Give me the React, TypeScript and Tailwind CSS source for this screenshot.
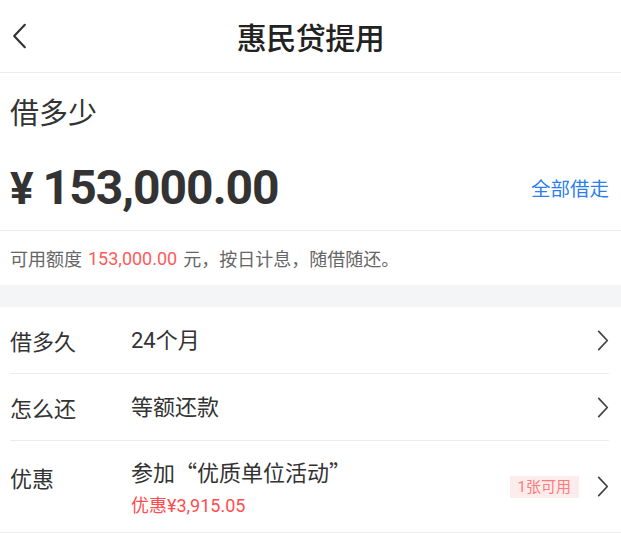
import React from 'react';

const CJK = '"Noto Sans CJK SC", sans-serif';
const NUM = 'Roboto, "Noto Sans CJK SC", sans-serif';

function Chevron({ dir = 'right', className = '' }: { dir?: 'left' | 'right'; className?: string }) {
  return (
    <svg viewBox="0 0 12 22" className={className} fill="none" stroke="currentColor" strokeWidth={1.8} strokeLinecap="round" strokeLinejoin="round">
      {dir === 'right' ? <polyline points="1.5,1.5 10.5,11 1.5,20.5" /> : <polyline points="10.5,1.5 1.5,11 10.5,20.5" />}
    </svg>
  );
}

function Row({ label, value }: { label: string; value: string }) {
  return (
    <div className="flex h-[67px] items-center border-b border-[#ececec]">
      <span className="w-[121px] text-[22px] text-[#333]">{label}</span>
      <span className="flex-1 text-[22px] text-[#333]" style={{ fontFamily: NUM }}>
        {value}
      </span>
      <Chevron className="h-[21px] w-[12px] text-[#444]" />
    </div>
  );
}

export default function App() {
  return (
    <div className="h-[533px] w-[621px] overflow-hidden bg-white" style={{ fontFamily: CJK }}>
      {/* nav bar */}
      <div className="grid h-[73px] grid-cols-[1fr_auto_1fr] items-center border-b border-[#ececec] px-[12px]">
        <Chevron dir="left" className="h-[26px] w-[15px] text-[#333]" />
        <h1 className="text-[30px] font-medium leading-none tracking-[-0.5px] text-[#222]">惠民贷提用</h1>
        <span />
      </div>

      {/* amount */}
      <div className="border-b border-[#ececec] pl-[10px] pr-[12px] pt-[21px]">
        <div className="text-[29px] leading-[35px] text-[#333]">借多少</div>
        <div className="flex h-[101px] items-center justify-between pt-[16px]">
          <div className="flex items-baseline text-[#333]" style={{ fontFamily: NUM }}>
            <span className="mr-[9px] text-[44px] font-bold leading-none">¥</span>
            <span className="text-[48px] font-bold leading-none tracking-[-1px]">153,000.00</span>
          </div>
          <span className="text-[19.5px] text-[#2b7ff0]">全部借走</span>
        </div>
      </div>

      {/* tip */}
      <div className="flex h-[54px] items-center px-[10px] text-[18px] text-[#666]">
        可用额度<span className="mx-[6px] text-[#ff5b5b]" style={{ fontFamily: NUM }}>153,000.00</span>元，按日计息，随借随还。
      </div>

      <div className="h-[22px] bg-[#f4f5f7]" />

      {/* options */}
      <div className="pl-[10px] pr-[12px]">
        <Row label="借多久" value="24个月" />
        <Row label="怎么还" value="等额还款" />
      </div>
      <div className="flex h-[92px] items-center border-b border-[#ececec] pl-[10px] pr-[12px]">
        <span className="-mt-[18px] w-[121px] text-[22px] text-[#333]">优惠</span>
        <div className="flex flex-1 flex-col gap-[10px]">
          <span className="text-[22px] leading-[28px] text-[#333]">参加“优质单位活动”</span>
          <span className="text-[18px] leading-[22px] text-[#ff4d4f]" style={{ fontFamily: NUM }}>
            优惠¥3,915.05
          </span>
        </div>
        <span className="mr-[18px] bg-[#fdecec] px-[8px] py-[1px] text-[15px] leading-[20px] text-[#ff7a7a]" style={{ fontFamily: NUM }}>
          1张可用
        </span>
        <Chevron className="h-[21px] w-[12px] text-[#444]" />
      </div>
    </div>
  );
}
